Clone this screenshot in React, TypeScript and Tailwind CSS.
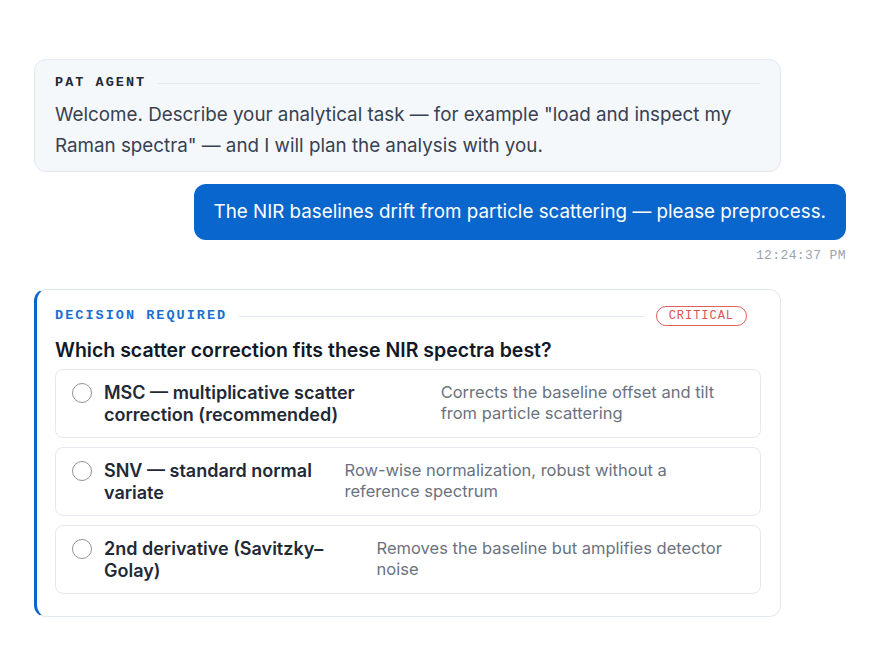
const SANS = "font-['Inter','Noto_Sans',sans-serif]"
const MONO = "font-['Liberation_Mono','DejaVu_Sans_Mono',monospace]"

type Option = {
  id: string
  label: string
  description: string
}

const OPTIONS: Option[] = [
  {
    id: "msc",
    label: "MSC — multiplicative scatter correction (recommended)",
    description: "Corrects the baseline offset and tilt from particle scattering",
  },
  {
    id: "snv",
    label: "SNV — standard normal variate",
    description: "Row-wise normalization, robust without a reference spectrum",
  },
  {
    id: "d2",
    label: "2nd derivative (Savitzky–Golay)",
    description: "Removes the baseline but amplifies detector noise",
  },
]

/* =====================
   AGENT MESSAGE
===================== */
function AgentMessage() {
  return (
    <div className="w-[747px] rounded-xl border border-[#e3e8ee] bg-[#f5f8fa] pl-[20px] pr-[20px] pt-[15px] pb-[10px]">
      <div className="flex items-center gap-3">
        <span className={`${MONO} text-[13.5px] font-bold leading-4 tracking-[0.15em] text-[#1f2937]`}>
          PAT AGENT
        </span>
        <div className="h-px flex-1 bg-[#e3e8ee]" />
      </div>
      <p className="mt-[8px] text-[18.8px] leading-[31px] text-[#374151]">
        Welcome. Describe your analytical task — for example "load and inspect my
        Raman spectra" — and I will plan the analysis with you.
      </p>
    </div>
  )
}

/* =====================
   USER MESSAGE
===================== */
function UserMessage() {
  return (
    <div className="mt-3 flex flex-col items-end">
      <div className="rounded-xl bg-[#0866cc] px-5 py-[14px] text-[18.8px] leading-[28px] text-white">
        The NIR baselines drift from particle scattering — please preprocess.
      </div>
      <span className={`${MONO} mt-[8px] text-[13px] leading-[16px] tracking-[0.03em] text-[#9ca3af]`}>
        12:24:37 PM
      </span>
    </div>
  )
}

/* =====================
   DECISION CARD
===================== */
function OptionRow({ option }: { option: Option }) {
  return (
    <button className="flex w-full items-start rounded-lg border border-[#e5e9ef] bg-white pl-4 pr-4 pt-3 pb-[11px] text-left">
      <span className="mt-[1px] h-5 w-5 shrink-0 rounded-full border-[1.5px] border-[#8e949c] bg-white" />
      <span className="ml-3 flex flex-1 gap-[14px]">
        <span className="text-[18px] font-semibold leading-[22px] text-[#1f2937]">
          {option.label}
        </span>
        <span className="text-[16.5px] leading-[21px] text-[#6b7280]">
          {option.description}
        </span>
      </span>
    </button>
  )
}

function DecisionCard() {
  return (
    <div className="mt-[25px] w-[747px] rounded-xl border border-[#e3e8ee] border-l-[3px] border-l-[#0866cc] bg-white pl-[18px] pr-[19px] pt-[16px] pb-[22px]">
      <div className="flex h-5 items-center">
        <span className={`${MONO} text-[13.5px] font-bold leading-4 tracking-[0.15em] text-[#1a6fd0]`}>
          DECISION REQUIRED
        </span>
        <div className="mx-3 h-px flex-1 bg-[#e3e8ee]" />
        <span className={`${MONO} mr-[14px] flex h-5 items-center rounded-full border-[1.5px] border-[#e0605c] px-3 text-[12px] tracking-[0.08em] text-[#d9534f]`}>
          CRITICAL
        </span>
      </div>

      <h3 className="mt-3 text-[19.5px] font-semibold leading-6 text-[#111827]">
        Which scatter correction fits these NIR spectra best?
      </h3>

      <div className="mt-[7px] flex flex-col gap-[9px]">
        {OPTIONS.map((o) => (
          <OptionRow key={o.id} option={o} />
        ))}
      </div>
    </div>
  )
}

/* =====================
   MAIN
===================== */
export default function App() {
  return (
    <div className={`${SANS} min-h-[660px] w-[880px] bg-white px-[34px] pt-[59px]`}>
      <AgentMessage />
      <UserMessage />
      <DecisionCard />
    </div>
  )
}
